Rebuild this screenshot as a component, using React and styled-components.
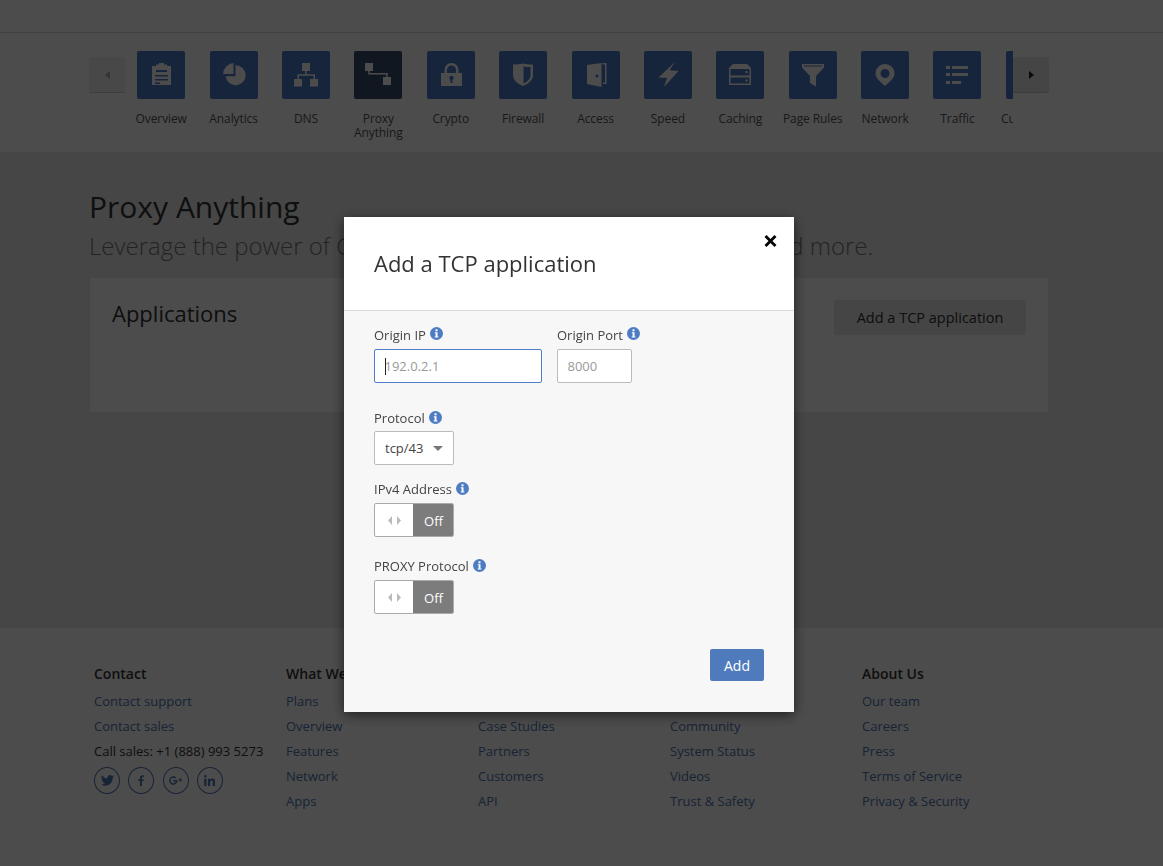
import React from 'react';
import styled, { createGlobalStyle } from 'styled-components';

const GlobalStyle = createGlobalStyle`
  html, body {
    margin: 0;
    padding: 0;
    background: #fff;
    font-family: "Open Sans", "Noto Sans", sans-serif;
    color: #333;
  }
  * { box-sizing: border-box; }
`;

// nav icons, drawn on a 48 box
const navIcons = {
  overview: <path fillRule="evenodd" d="M15 15h4v-1.500h3V12h5v1.500h3V15h4v19H15V15zm4 4v2h11v-2H19zm-1 5v1.500h13V24H18zm0 4v1.500h13V28H18zm0 3.500V33h5v-1.500h-5z" />,
  analytics: <path d="M23.500 12a11.500 11.500 0 0 0-10.500 11h10.500V12zM25.500 14.200v11h-9.800a10 10 0 1 0 9.800-11z" />,
  dns: <path d="M20 12h8v8h-8zM23.250 20h1.500v3.250h8.250V28h-1.500v-3.250H17V28h-1.500v-4.750h7.750zM12 28h8v7.500h-8zM28 28h8v7.500h-8z" />,
  proxy: <path d="M11 12h8v8h-8zM14.250 20h1.500v2h18v4h-1.500v-2.500h-18zM29 26h8v8h-8z" />,
  crypto: <path fillRule="evenodd" d="M17.500 22v-3a7 7 0 0 1 14 0v3H35v13H14V22h3.500zm2.500 0h9v-3a4.500 4.500 0 0 0-9 0v3zm2.300 5a2.200 2.200 0 0 0 1.200 1.900V32h2v-3.100a2.200 2.200 0 1 0-3.200-1.900z" />,
  firewall: <path fillRule="evenodd" d="M14 13.500c4 0 7-.3 10-1 3 .7 6 1 10 1V24c0 5-4 8.500-10 11-6-2.500-10-6-10-11V13.500zm10.500 2v17c3-1.500 7-4 7-8.500v-8c-2.500 0-5 0-7-.5z" />,
  access: <path fillRule="evenodd" d="M15 14l14.500-2v24L15 33V14zm15.500-2h4v21h-3.500v-1.500h2v-18h-2.500V12zM25 23.500a1.500 1.500 0 1 0 0 3 1.500 1.500 0 0 0 0-3z" />,
  speed: <path d="M31 11L14.500 26.500l8.500.5-3 9L34.500 20l-9-.7z" />,
  caching: <path fillRule="evenodd" d="M17 13h14l4 4v17H13V17l4-4zm-2.500 5v6.500h19V18h-19zm0 8.500v6h19v-6h-19zm15-6.500h2v2h-2v-2zm0 8.500h2v2h-2v-2z" />,
  rules: <path fillRule="evenodd" d="M13 13h22v3.500l-8 8.500v10.500l-6-3.500v-7l-8-8.500V13zm2 1.500v1h18v-1H15z" />,
  network: <path fillRule="evenodd" d="M24 13a9.500 9.500 0 0 1 9.500 9.500c0 5-5 8-9.500 12.500-4.500-4.500-9.500-7.500-9.500-12.500A9.500 9.500 0 0 1 24 13zm0 5a4.500 4.500 0 1 0 0 9 4.500 4.500 0 0 0 0-9z" />,
  traffic: <path d="M13 15h4v3h-4zM19 15h16v3H19zM13 22h4v3h-4zM19 22h16v3H19zM13 30h4v3h-4zM19 30h9v3h-9z" />,
  customize: <path d="M14 15h20v3H14z" />,
};

const navItems = [
  { key: 'overview', label: 'Overview' },
  { key: 'analytics', label: 'Analytics' },
  { key: 'dns', label: 'DNS' },
  { key: 'proxy', label: 'Proxy Anything', active: true },
  { key: 'crypto', label: 'Crypto' },
  { key: 'firewall', label: 'Firewall' },
  { key: 'access', label: 'Access' },
  { key: 'speed', label: 'Speed' },
  { key: 'caching', label: 'Caching' },
  { key: 'rules', label: 'Page Rules' },
  { key: 'network', label: 'Network' },
  { key: 'traffic', label: 'Traffic' },
  { key: 'customize', label: 'Customize' },
];

const footerColumns = [
  { title: 'What We Do', links: ['Plans', 'Overview', 'Features', 'Network', 'Apps'] },
  { title: 'Resources', links: ['Blog', 'Case Studies', 'Partners', 'Customers', 'API'] },
  { title: 'Support', links: ['Help Center', 'Community', 'System Status', 'Videos', 'Trust & Safety'] },
  { title: 'About Us', links: ['Our team', 'Careers', 'Press', 'Terms of Service', 'Privacy & Security'] },
];

const TopStrip = styled.div`
  height: 33px;
  background: #fff;
  border-bottom: 1px solid #d9d9d9;
`;

const NavBar = styled.nav`
  height: 119px;
  background: #fff;
  padding: 18px 114px 0 89px;
  display: flex;
  align-items: flex-start;
`;

const NavArrow = styled.button`
  flex: none;
  width: 36px;
  height: 36px;
  margin-top: 6px;
  padding: 0;
  border: 0;
  border-bottom: 1px solid #c8c8c8;
  border-radius: 2px;
  background: ${(p) => (p.$disabled ? '#f2f2f2' : '#e6e6e6')};
  display: flex;
  align-items: center;
  justify-content: center;

  svg { fill: ${(p) => (p.$disabled ? '#aaa' : '#222')}; }
`;

const NavScroller = styled.div`
  flex: none;
  width: 888px;
  display: flex;
  overflow: hidden;
`;

const NavItem = styled.a`
  flex: none;
  width: 72.4px;
  display: flex;
  flex-direction: column;
  align-items: center;
  text-align: center;
  font-size: 12px;
  line-height: 14px;
  letter-spacing: -0.1px;
  color: #555;
`;

const NavIcon = styled.span`
  width: 48px;
  height: 48px;
  margin-bottom: 13px;
  border-radius: 2px;
  background: ${(p) => (p.$active ? '#364d70' : '#4f7ec8')};
  display: block;

  svg { display: block; fill: #fff; }
`;

const Main = styled.main`
  height: 476px;
  background: #ebebeb;
  padding: 37px 115px 0 89px;
`;

const PageTitle = styled.h1`
  margin: 0;
  font-size: 30px;
  font-weight: 400;
  line-height: 36px;
  color: #333;
`;

const PageLead = styled.p`
  margin: 5px 0 0;
  font-size: 24px;
  font-weight: 300;
  line-height: 32px;
  color: #777;
  white-space: nowrap;
`;

const Card = styled.section`
  margin: 16px 0 0 1px;
  width: 958px;
  height: 134px;
  background: #fff;
  padding: 20px 22px;
  display: flex;
  justify-content: space-between;
  align-items: flex-start;
`;

const CardTitle = styled.h2`
  margin: 0;
  font-size: 22px;
  font-weight: 400;
  line-height: 30px;
  color: #333;
`;

const GreyButton = styled.button`
  width: 192px;
  height: 35px;
  margin-top: 2px;
  border: 0;
  border-radius: 2px;
  background: #e6e6e6;
  font: 400 14.5px "Open Sans", sans-serif;
  color: #333;
`;

const Footer = styled.footer`
  height: 238px;
  background: #fff;
  padding: 36px 0 0 94px;
  display: grid;
  grid-template-columns: repeat(5, 192px);
  align-content: start;
`;

const FooterCol = styled.div`
  display: flex;
  flex-direction: column;
  align-items: flex-start;
  font-size: 13px;
  line-height: 25px;
`;

const FooterTitle = styled.h3`
  margin: 0 0 5px;
  font-size: 14px;
  font-weight: 600;
  line-height: 20px;
  color: #333;
`;

const FooterLink = styled.a`
  color: #4f78b4;
`;

const FooterText = styled.span`
  color: #333;
  white-space: nowrap;
`;

const SocialRow = styled.div`
  display: flex;
  gap: 8.3px;
  margin-top: 3px;
`;

const SocialIcon = styled.a`
  width: 26px;
  height: 27px;
  border: 1px solid #4f78b4;
  border-radius: 50%;
  color: #4f78b4;
  display: flex;
  align-items: center;
  justify-content: center;

  svg { display: block; fill: currentColor; }
`;

const Backdrop = styled.div`
  position: fixed;
  inset: 0;
  background: rgba(0, 0, 0, 0.7);
`;

const Modal = styled.div`
  position: fixed;
  left: 344px;
  top: 217px;
  width: 450px;
  height: 495px;
  background: #f7f7f7;
  box-shadow: 0 3px 12px rgba(0, 0, 0, 0.6);
  display: flex;
  flex-direction: column;
`;

const ModalHeader = styled.header`
  height: 94px;
  background: #fff;
  border-bottom: 1px solid #d9d9d9;
  padding: 31px 30px 0;
`;

const ModalTitle = styled.h2`
  margin: 0;
  font-size: 22px;
  font-weight: 400;
  line-height: 30px;
  color: #333;
`;

const CloseButton = styled.button`
  position: absolute;
  top: 16px;
  right: 16px;
  width: 16px;
  height: 16px;
  padding: 0;
  border: 0;
  background: none;

  svg { display: block; }
`;

const ModalBody = styled.div`
  flex: 1;
  padding: 15px 30px 0;
  display: flex;
  flex-direction: column;
`;

const FieldRow = styled.div`
  display: flex;
  gap: 15px;
`;

const Field = styled.div`
  display: flex;
  flex-direction: column;
  align-items: flex-start;
  margin-bottom: ${(p) => p.$gap || 0}px;
`;

const Label = styled.label`
  display: flex;
  align-items: flex-start;
  height: ${(p) => p.$height}px;
  font-size: 13px;
  line-height: ${(p) => p.$height - 5}px;
  color: #444;
  white-space: nowrap;
`;

const InfoDot = styled.svg`
  margin: 1px 0 0 4px;
  flex: none;
`;

const TextField = styled.div`
  position: relative;
  width: ${(p) => p.$width}px;
  height: 34px;
  padding-left: 9.5px;
  border: 1px solid ${(p) => (p.$focus ? '#4f7ec8' : '#bbb')};
  border-radius: 2px;
  background: #fff;
  font-size: 13px;
  line-height: 32px;
  color: #999;
`;

const Caret = styled.span`
  position: absolute;
  left: 10px;
  top: 8px;
  width: 1px;
  height: 17px;
  background: #222;
`;

const SelectBox = styled.div`
  width: 80px;
  height: 34px;
  padding: 0 10px;
  border: 1px solid #bbb;
  border-radius: 2px;
  background: #fff;
  font-size: 13px;
  line-height: 32px;
  color: #444;
  display: flex;
  justify-content: space-between;
  align-items: center;
`;

const Toggle = styled.div`
  width: 80px;
  height: 34px;
  border: 1px solid #aaa;
  border-radius: 2px;
  background: #fff;
  display: flex;
  overflow: hidden;
`;

const ToggleKnob = styled.span`
  width: 38px;
  display: flex;
  align-items: center;
  justify-content: center;

  svg { display: block; fill: #bbb; }
`;

const ToggleState = styled.span`
  flex: 1;
  padding-left: 1px;
  background: #7c7c7c;
  color: #fff;
  font-size: 13px;
  line-height: 34px;
  text-align: center;
`;

const ModalFooter = styled.div`
  margin-top: 35px;
  display: flex;
  justify-content: flex-end;
`;

const PrimaryButton = styled.button`
  width: 54px;
  height: 32px;
  border: 0;
  border-radius: 2px;
  background: #4f7bbd;
  color: #fff;
  font: 400 14px "Open Sans", sans-serif;
`;

const Info = () => (
  <InfoDot width="13" height="13" viewBox="0 0 13 13">
    <circle cx="6.500" cy="6.500" r="6.500" fill="#4d7cc2" />
    <rect x="5.500" y="2.300" width="2" height="2" fill="#fff" />
    <path d="M4.800 5.300h2.700v4.300h.9v1H4.700v-1h.9V6.300h-.8z" fill="#fff" />
  </InfoDot>
);

const ToggleField = ({ label, gap }) => (
  <Field $gap={gap}>
    <Label $height={22}>{label}<Info /></Label>
    <Toggle>
      <ToggleKnob>
        <svg width="13" height="9" viewBox="0 0 13 9">
          <path d="M4 0v9L0 4.500zM9 0v9l4-4.500z" />
        </svg>
      </ToggleKnob>
      <ToggleState>Off</ToggleState>
    </Toggle>
  </Field>
);

const App = () => (
  <>
    <GlobalStyle />
    <TopStrip />
    <NavBar>
      <NavArrow $disabled>
        <svg width="5" height="8" viewBox="0 0 5 8"><path d="M5 0v8L0 4z" /></svg>
      </NavArrow>
      <NavScroller>
        {navItems.map((item) => (
          <NavItem key={item.key}>
            <NavIcon $active={item.active}>
              <svg width="48" height="48" viewBox="0 0 48 48">{navIcons[item.key]}</svg>
            </NavIcon>
            {item.label}
          </NavItem>
        ))}
      </NavScroller>
      <NavArrow>
        <svg width="5" height="8" viewBox="0 0 5 8"><path d="M0 0v8l5-4z" /></svg>
      </NavArrow>
    </NavBar>
    <Main>
      <PageTitle>Proxy Anything</PageTitle>
      <PageLead>Leverage the power of Cloudflare for TCP services: SSH, SMTP, and more.</PageLead>
      <Card>
        <CardTitle>Applications</CardTitle>
        <GreyButton>Add a TCP application</GreyButton>
      </Card>
    </Main>
    <Footer>
      <FooterCol>
        <FooterTitle>Contact</FooterTitle>
        <FooterLink>Contact support</FooterLink>
        <FooterLink>Contact sales</FooterLink>
        <FooterText>Call sales: +1 (888) 993 5273</FooterText>
        <SocialRow>
          <SocialIcon>
            <svg width="13" height="11" viewBox="0 0 24 20"><path d="M24 2.400a10 10 0 0 1-2.800.8A5 5 0 0 0 23.300.500a10 10 0 0 1-3.100 1.200 4.900 4.900 0 0 0-8.400 4.500A14 14 0 0 1 1.700.900a4.900 4.900 0 0 0 1.500 6.600 5 5 0 0 1-2.200-.6c0 2.400 1.700 4.400 3.900 4.900a5 5 0 0 1-2.200.1 4.900 4.900 0 0 0 4.600 3.400A9.900 9.900 0 0 1 0 17.400 14 14 0 0 0 21.500 5c1-.7 1.900-1.600 2.500-2.600z" /></svg>
          </SocialIcon>
          <SocialIcon>
            <svg width="6" height="11" viewBox="0 0 10 18"><path d="M6.500 18V10h2.700l.4-3.200H6.500v-2c0-.9.300-1.500 1.600-1.500h1.600V.4C9.400.3 8.500.2 7.400.2 5 .2 3.300 1.700 3.300 4.400v2.400H.5V10h2.800v8z" /></svg>
          </SocialIcon>
          <SocialIcon>
            <svg width="14" height="9" viewBox="0 0 26 16"><path d="M8 7v3h4.500C12.100 12 10.400 13 8 13a5 5 0 0 1 0-10c1.300 0 2.400.5 3.300 1.200l2.200-2.200A8 8 0 1 0 8 16c4.600 0 7.700-3.200 7.700-7.800 0-.4 0-.8-.1-1.200H8zM22 6V3.500h-2V6h-2.500v2H20v2.500h2V8h2.500V6z" /></svg>
          </SocialIcon>
          <SocialIcon>
            <svg width="11" height="11" viewBox="0 0 16 16"><path d="M.3 5.300h3.300V16H.3zM2 0a1.900 1.900 0 1 1 0 3.800A1.900 1.900 0 0 1 2 0zM5.700 5.300h3.200v1.500c.5-.9 1.600-1.700 3.200-1.700 3.400 0 3.900 2.200 3.900 5.100V16h-3.300v-5.100c0-1.200 0-2.800-1.700-2.800s-2 1.300-2 2.700V16H5.700z" /></svg>
          </SocialIcon>
        </SocialRow>
      </FooterCol>
      {footerColumns.map((col) => (
        <FooterCol key={col.title}>
          <FooterTitle>{col.title}</FooterTitle>
          {col.links.map((link) => <FooterLink key={link}>{link}</FooterLink>)}
        </FooterCol>
      ))}
    </Footer>
    <Backdrop />
    <Modal>
      <CloseButton>
        <svg width="16" height="16" viewBox="0 0 16 16"><path d="M3.500 3l10 10M13.500 3l-10 10" stroke="#000" strokeWidth="2.800" /></svg>
      </CloseButton>
      <ModalHeader>
        <ModalTitle>Add a TCP application</ModalTitle>
      </ModalHeader>
      <ModalBody>
        <FieldRow>
          <Field $gap={27}>
            <Label $height={23}>Origin IP<Info /></Label>
            <TextField $width={168} $focus>192.0.2.1<Caret /></TextField>
          </Field>
          <Field $gap={27}>
            <Label $height={23}>Origin Port<Info /></Label>
            <TextField $width={75}>8000</TextField>
          </Field>
        </FieldRow>
        <Field $gap={16}>
          <Label $height={21}>Protocol<Info /></Label>
          <SelectBox>
            tcp/43
            <svg width="10" height="5" viewBox="0 0 10 5"><path d="M0 0h10L5 5z" fill="#777" /></svg>
          </SelectBox>
        </Field>
        <ToggleField label="IPv4 Address" gap={21} />
        <ToggleField label="PROXY Protocol" />
        <ModalFooter>
          <PrimaryButton>Add</PrimaryButton>
        </ModalFooter>
      </ModalBody>
    </Modal>
  </>
);

export default App;
